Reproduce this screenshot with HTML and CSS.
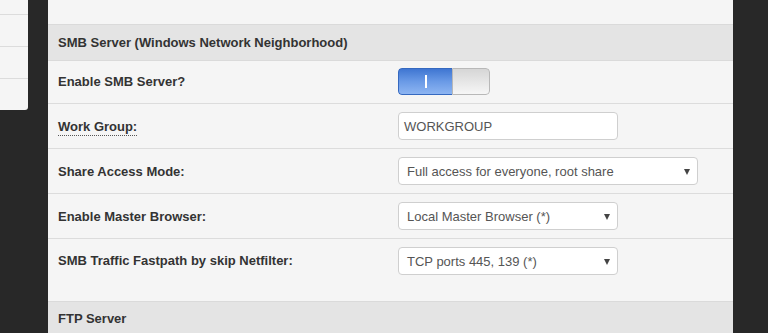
FILE: index.html
```html
<!DOCTYPE html>
<html>
<head>
<meta charset="utf-8">
<link rel="stylesheet" href="styles.css">
</head>
<body>
<div class="page">
  <div class="sidebar">
    <div class="side-item first"></div>
    <div class="side-item"></div>
    <div class="side-item"></div>
    <div class="side-item last"></div>
  </div>
  <div class="panel">
    <div class="panel-top"></div>
    <div class="section-head">SMB Server (Windows Network Neighborhood)</div>
    <div class="row row-toggle">
      <div class="label">Enable SMB Server?</div>
      <div class="control">
        <div class="toggle">
          <div class="toggle-on"><span class="bar"></span></div>
          <div class="toggle-off"></div>
        </div>
      </div>
    </div>
    <div class="row">
      <div class="label"><span class="dotted">Work Group:</span></div>
      <div class="control"><div class="field text narrow">WORKGROUP</div></div>
    </div>
    <div class="row">
      <div class="label">Share Access Mode:</div>
      <div class="control"><div class="field select wide">Full access for everyone, root share<span class="arrow"></span></div></div>
    </div>
    <div class="row">
      <div class="label">Enable Master Browser:</div>
      <div class="control"><div class="field select narrow">Local Master Browser (*)<span class="arrow"></span></div></div>
    </div>
    <div class="row last-row">
      <div class="label">SMB Traffic Fastpath by skip Netfilter:</div>
      <div class="control"><div class="field select narrow">TCP ports 445, 139 (*)<span class="arrow"></span></div></div>
    </div>
    <div class="section-head ftp">FTP Server</div>
  </div>
</div>
</body>
</html>
```

FILE: styles.css
```css
html, body {
  margin: 0;
  padding: 0;
  height: 100%;
  overflow: hidden;
}
body {
  background: #282828;
  font-family: "Liberation Sans", Arial, sans-serif;
  font-size: 13px;
  color: #333;
}
.page {
  display: flex;
  align-items: flex-start;
  gap: 20px;
  height: 333px;
}
.sidebar {
  width: 28px;
  flex: none;
  background: #f5f5f5;
  border-bottom-right-radius: 3px;
  display: flex;
  flex-direction: column;
}
.side-item {
  flex: none;
  height: 31px;
  border-bottom: 1px solid #dcdcdc;
}
.side-item.first {
  height: 14px;
}
.side-item.last {
  height: 31px;
  border-bottom: none;
}
.panel {
  width: 685px;
  flex: none;
  background: #f5f5f5;
  height: 333px;
  overflow: hidden;
  display: flex;
  flex-direction: column;
}
.panel > * {
  flex: none;
}
.panel-top {
  height: 24px;
}
.section-head {
  background: #e4e4e4;
  border-top: 1px solid #dadada;
  border-bottom: 1px solid #dadada;
  height: 35px;
  display: flex;
  align-items: center;
  padding: 0 10px;
  font-weight: bold;
  font-size: 13px;
  color: #333;
}
.section-head.ftp {
  border-bottom: none;
  height: 32px;
  padding-bottom: 3px;
}
.row {
  display: grid;
  grid-template-columns: 340px 1fr;
  align-items: center;
  padding: 8px 10px;
  border-bottom: 1px solid #dcdcdc;
}
.row-toggle {
  padding-top: 7px;
  padding-bottom: 8px;
}
.last-row {
  border-bottom: none;
  align-items: start;
  padding-bottom: 26px;
}
.last-row .label {
  line-height: 28px;
}
.label {
  font-weight: bold;
  color: #333;
}
.dotted {
  border-bottom: 1px dotted #555;
  padding-bottom: 1px;
}
.control {
  display: flex;
}
.toggle {
  display: flex;
  width: 92px;
  height: 27px;
  border-radius: 4px;
  overflow: hidden;
  box-sizing: border-box;
}
.toggle-on {
  width: 54px;
  box-sizing: border-box;
  background: linear-gradient(#3f76d2, #6a9ae6 50%, #8db5f2);
  border: 1px solid #3569c0;
  border-right: none;
  border-radius: 4px 0 0 4px;
  display: flex;
  align-items: center;
  justify-content: center;
}
.bar {
  width: 2px;
  height: 13px;
  background: #fff;
}
.toggle-off {
  flex: 1;
  box-sizing: border-box;
  background: linear-gradient(#d6d6d6, #f6f6f6);
  border: 1px solid #b8b8b8;
  border-radius: 0 4px 4px 0;
}
.field {
  position: relative;
  box-sizing: border-box;
  height: 28px;
  background: #fff;
  border: 1px solid #cfcfcf;
  border-radius: 4px;
  padding: 0 10px 0 8px;
  display: flex;
  align-items: center;
  color: #555;
  font-size: 13px;
}
.field.text {
  padding-left: 5px;
}
.narrow {
  width: 220px;
}
.wide {
  width: 300px;
}
.arrow {
  position: absolute;
  right: 7px;
  top: 11px;
  width: 0;
  height: 0;
  border-left: 3.5px solid transparent;
  border-right: 3.5px solid transparent;
  border-top: 6px solid #444;
}
```
